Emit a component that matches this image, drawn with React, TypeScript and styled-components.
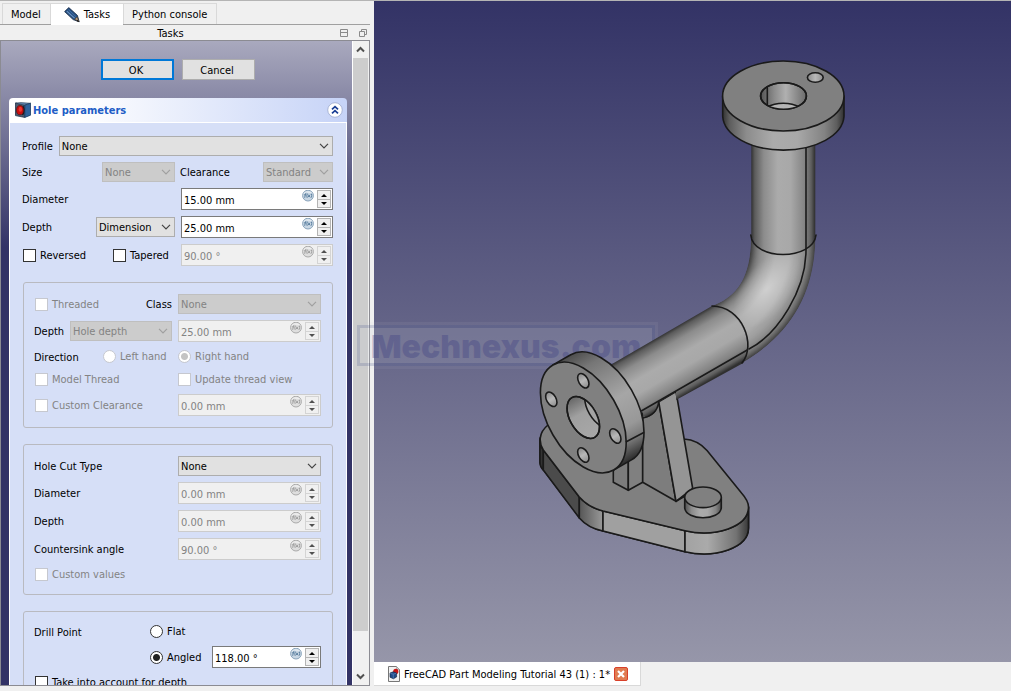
import React, { useId } from "react";
import styled, { createGlobalStyle, css } from "styled-components";

const GlobalStyle = createGlobalStyle`
  *, *::before, *::after { box-sizing: border-box; }
  body {
    margin: 0;
    background: #f0f0f0;
    color: #000;
    font: 11px/14px "DejaVu Sans Condensed", "Noto Sans", sans-serif;
  }
  button, input, select { font: inherit; color: inherit; margin: 0; padding: 0; }
`;

/* ---------- window ---------- */

const Window = styled.div`
  display: flex;
  height: 100vh;
  overflow: hidden;
`;

const Dock = styled.aside`
  flex: 0 0 374px;
  display: flex;
  flex-direction: column;
  padding: 0 4px 5px 0;
  border-top: 1px solid #b4b4b4;
`;

const Tabs = styled.div`
  display: flex;
  height: 24px;
  padding: 2px 0 0 2px;
  border-bottom: 1px solid #a0a0a0;
`;

const Tab = styled.button<{ $active?: boolean }>`
  display: flex;
  align-items: center;
  gap: 4px;
  height: ${(p) => (p.$active ? 22 : 21)}px;
  padding: ${(p) => (p.$active ? "0 13px" : "2px 9px 0 8px")};
  border: 1px solid #d9d9d9;
  border-width: ${(p) => (p.$active ? "1px 0 0" : "1px 1px 0")};
  background: ${(p) => (p.$active ? "#fff" : "#f0f0f0")};
  white-space: nowrap;
`;

const DockTitle = styled.header`
  display: flex;
  align-items: center;
  height: 15px;
  padding-right: 3px;
  gap: 11px;
`;

const DockName = styled.h1`
  flex: 1;
  margin: 0 0 0 12px;
  padding-top: 2px;
  font-size: 11px;
  font-weight: 400;
  text-align: center;
`;

const BareButton = styled.button`
  display: flex;
  border: 0;
  background: none;
`;

const Panel = styled.div`
  flex: 1;
  min-height: 0;
  display: flex;
  border: 1px solid #8b8b92;
`;

const TaskArea = styled.form`
  flex: 1;
  min-width: 0;
  overflow: hidden;
  padding: 18px 5px 0 8px;
  border-right: 1px solid #fff;
  background: #333366 linear-gradient(#a9a9be, #333366) top / 100% 206px no-repeat;
`;

const Actions = styled.div`
  display: flex;
  justify-content: center;
  gap: 8px;
  margin-bottom: 18px;
`;

const ActionButton = styled.button<{ $primary?: boolean }>`
  width: 73px;
  height: 21px;
  padding: ${(p) => (p.$primary ? "2px 3px 0 0" : "2px 3px 0 0")};
  border: ${(p) => (p.$primary ? "2px solid #0078d7" : "1px solid #adadad")};
  background: #e1e1e1;
`;

const Card = styled.section`
  border-radius: 4px 4px 0 0;
  overflow: hidden;
`;

const CardHeader = styled.header`
  display: flex;
  align-items: center;
  gap: 2px;
  height: 25px;
  padding: 0 4px 0 6px;
  background: linear-gradient(90deg, #fff 20%, #c6d3f7);
  border-bottom: 1px solid #fff;
`;

const CardTitle = styled.h2`
  flex: 1;
  margin: 0;
  padding-top: 2px;
  color: #215dc6;
  font-size: 11px;
  font-weight: 700;
`;

const CardBody = styled.div`
  display: flex;
  flex-direction: column;
  gap: 16px;
  padding: 13px 13px 20px;
  border: 1px solid #fff;
  border-width: 0 1px;
  background: #d6dff7;
`;

const Rows = styled.div`
  display: flex;
  flex-direction: column;
  gap: 6px;
`;

const Group = styled.fieldset`
  display: flex;
  flex-direction: column;
  gap: 6px;
  min-width: 0;
  margin: 0;
  padding: 11px;
  border: 1px solid #b9bac0;
  border-radius: 3px;
`;

const Row = styled.div<{ $right?: string }>`
  display: grid;
  grid-template-columns: minmax(0, 1fr) ${(p) => p.$right ?? "minmax(0, 1fr)"};
  column-gap: 6px;
  align-items: center;
`;

const Line = styled.div`
  display: flex;
  align-items: center;
  gap: 6px;
`;

const Cell = styled.div`
  display: flex;
  align-items: center;
  justify-content: space-between;
  min-width: 0;
`;

const labelText = css`
  margin-left: -1px;
  padding-top: 2px;
  white-space: nowrap;
`;

const Label = styled.label`
  ${labelText}
`;

const Caption = styled.span`
  ${labelText}
`;

/* ---------- controls ---------- */

const SelectBox = styled.div<{ $width?: number }>`
  position: relative;
  ${(p) => (p.$width ? css`width: ${p.$width}px;` : css`flex: 1; min-width: 0;`)}
  svg {
    position: absolute;
    right: 4px;
    top: 7px;
    pointer-events: none;
  }
`;

const Select = styled.select`
  appearance: none;
  display: block;
  width: 100%;
  height: 20px;
  padding: 2px 14px 0 2px;
  border: 1px solid #adadad;
  border-radius: 0;
  background: #e1e1e1;
  &:disabled { opacity: 1; color: #838383; background: #ccc; border-color: #bfbfbf; }
`;

const SpinBox = styled.div<{ $disabled?: boolean; $width?: number }>`
  display: flex;
  align-items: flex-start;
  gap: 3px;
  height: 22px;
  ${(p) => (p.$width ? css`width: ${p.$width}px;` : css`width: 100%;`)}
  padding: 1px;
  border: 1px solid ${(p) => (p.$disabled ? "#ccc" : "#7a7a7a")};
  background: ${(p) => (p.$disabled ? "#f0f0f0" : "#fff")};
  color: ${(p) => (p.$disabled ? "#838383" : "#000")};
`;

const SpinInput = styled.input`
  flex: 1;
  min-width: 0;
  height: 18px;
  padding: 3px 0 0 1px;
  border: 0;
  outline: 0;
  background: none;
`;

const Steppers = styled.div`
  display: flex;
  flex-direction: column;
  width: 14px;
`;

const Step = styled.button<{ $lower?: boolean }>`
  display: flex;
  align-items: center;
  justify-content: center;
  height: ${(p) => (p.$lower ? 9 : 10)}px;
  margin-top: ${(p) => (p.$lower ? -1 : 0)}px;
  border: 1px solid #b4b4b4;
  background: #f0f0f0;
  color: #000;
  &:disabled { border-color: #d4d4d4; color: #505050; }
`;

const ToggleLabel = styled.label<{ $disabled?: boolean; $width?: number }>`
  display: flex;
  align-items: center;
  gap: 4px;
  height: 17px;
  ${(p) => p.$width && css`width: ${p.$width}px;`}
  white-space: nowrap;
  color: ${(p) => (p.$disabled ? "#838383" : "#000")};
`;

const ToggleText = styled.span`
  padding-top: 1px;
`;

const Toggle = styled.input`
  appearance: none;
  flex: none;
  width: 13px;
  height: 13px;
  border: 1px solid #333;
  background: #fff;
  &[type="radio"] { border-radius: 50%; }
  &:disabled { border-color: #c6c8cf; }
  &[type="radio"]:checked { background: radial-gradient(circle, #222 0 3px, #fff 4px); }
  &[type="radio"]:checked:disabled { background: radial-gradient(circle, #c4c4c4 0 3px, #fff 4px); }
`;

const ScrollBar = styled.div`
  display: flex;
  flex-direction: column;
  align-items: center;
  width: 16px;
  padding-right: 1px;
  background: #f0f0f0;
`;

const ScrollArrow = styled.button`
  display: flex;
  align-items: center;
  justify-content: center;
  width: 100%;
  height: 17px;
  border: 0;
  background: none;
`;

const ScrollTrack = styled.div`
  flex: 1;
  width: 100%;
`;

const ScrollThumb = styled.div`
  height: 94%;
  background: #cdcdcd;
`;

/* ---------- 3D view ---------- */

const Main = styled.main`
  flex: 1;
  min-width: 0;
  display: flex;
  flex-direction: column;
`;

const Viewport = styled.div`
  position: relative;
  flex: 1;
  min-height: 0;
  border-top: 1px solid #b4b4b4;
  background: linear-gradient(#333366, #9696a9);
`;

const Scene = styled.svg`
  position: relative;
  display: block;
  width: 100%;
  height: 100%;
`;

const Watermark = styled.div`
  position: absolute;
  left: -20px;
  top: 321px;
  padding: 3px;
  background: rgba(200, 205, 215, 0.08);
`;

const WatermarkText = styled.div`
  width: 298px;
  height: 41px;
  border: 3px solid rgba(60, 75, 135, 0.2);
  background: rgba(200, 205, 215, 0.1);
  background-clip: padding-box;
  color: rgba(60, 62, 130, 0.34);
  font: 900 32px/37px Inter, "DejaVu Sans", sans-serif;
  text-align: center;
`;

const DocumentBar = styled.div`
  height: 29px;
  background: #f0f0f0;
`;

const DocumentTab = styled.div`
  display: flex;
  align-items: center;
  width: max-content;
  height: 24px;
  padding: 0 12px 0 14px;
  gap: 4px;
  border: 1px solid #d9d9d9;
  border-width: 0 1px 1px 0;
  background: #fff;
  white-space: nowrap;
`;

const DocumentName = styled.span`
  padding-top: 2px;
`;

/* ---------- icons ---------- */

const Chevron = ({ color }: { color: string }) => (
  <svg width="10" height="6" viewBox="0 0 10 6" fill="none" stroke={color} strokeWidth="1.2">
    <path d="M1 .8 5 4.8 9 .8" />
  </svg>
);

const ScrollChevron = ({ down }: { down?: boolean }) => (
  <svg width="9" height="7" viewBox="0 0 9 7" fill="none" stroke="#505050" strokeWidth="2">
    <path d={down ? "M1 1.5 4.5 5 8 1.5" : "M1 5.5 4.5 2 8 5.5"} />
  </svg>
);

const FxIcon = ({ disabled }: { disabled?: boolean }) => {
  const ink = disabled ? "#9a9a9a" : "#54799b";
  return (
    <svg width="12" height="12" viewBox="0 0 12 12" fill="none">
      <circle cx="6" cy="5.6" r="5.4" fill={disabled ? "#dedede" : "#c9d7e4"} stroke={disabled ? "#aaa" : "#8aa4bb"} />
      <path d="M1.5 4.2Q6 1.4 10.5 4.2L10 2.6Q6 -.2 2 2.6Z" fill="#fff" opacity=".5" />
      <g stroke={ink} strokeWidth=".9">
        <path d="M4.4 3.2C3.4 3 3.4 3.8 3.2 5L2.7 7.8M2.2 4.8H4.2M5.4 3.6Q4.4 5.6 5.1 7.8M9.4 3.6Q10.2 5.6 9 7.8M6.1 4.6 8 7.2M8.2 4.6 5.9 7.2" />
      </g>
    </svg>
  );
};

const PencilIcon = () => (
  <svg width="16" height="16" viewBox="0 0 16 16">
    <path d="M.6 4.6 4.8.6 13.4 8.4 15.2 14.8 9.2 12.6Z" fill="#274f80" stroke="#10233f" strokeWidth=".8" />
    <path d="M2.8 4.2 10.6 11.2" stroke="#6f97c4" strokeWidth="1.1" />
    <path d="M4.4 2.6 12.2 9.8" stroke="#3f6ea6" strokeWidth="1" />
    <path d="M10.6 12.2 13.2 9.8 15 14.8Z" fill="#b79a7a" stroke="#33291f" strokeWidth=".5" />
    <path d="m13.4 12.8 1.6 2.2-2.4-.9Z" fill="#111" />
  </svg>
);

const HoleIcon = () => (
  <svg width="16" height="16" viewBox="0 0 16 16">
    <path d="M.5 1 9.8 3.2V15.4L.5 13.6Z" fill="#4b5b70" stroke="#23344b" strokeWidth=".8" />
    <path d="M.5 1 6 .5 15.5 1.2 9.8 3.2Z" fill="#5d83ab" stroke="#23344b" strokeWidth=".5" />
    <path d="M9.8 3.2 15.5 1.2V13.2L9.8 15.4Z" fill="#2f639b" stroke="#1b3a60" strokeWidth=".8" />
    <path d="M7.8 4.2Q10.2 8.5 7.6 13" fill="none" stroke="#101820" strokeWidth="1.4" />
    <ellipse cx="5" cy="8.2" rx="3.5" ry="4.6" fill="#cc0e0e" stroke="#5a1616" strokeWidth=".8" />
    <ellipse cx="5.4" cy="7.2" rx="1.7" ry="2.5" fill="#ef3a30" />
  </svg>
);

const CollapseIcon = () => (
  <svg width="16" height="16" viewBox="0 0 16 16" fill="none">
    <circle cx="8" cy="8" r="7.3" fill="#fff" stroke="#a9b5d6" />
    <path d="M5 7.4 8 4.6 11 7.4M5 11.4 8 8.6 11 11.4" stroke="#1b3f95" strokeWidth="1.7" />
  </svg>
);

const FloatIcon = () => (
  <svg width="8" height="8" viewBox="0 0 8 8" fill="none" stroke="#8a8a8a">
    <path d="M.5 .5H7.5V7.5H.5ZM.5 3.5H7.5" />
  </svg>
);

const RestoreIcon = () => (
  <svg width="8" height="8" viewBox="0 0 8 8" fill="none" stroke="#8a8a8a">
    <path d="M2.5 2.5V.5H7.5V5.5H5.5M.5 2.5H5.5V7.5H.5Z" />
  </svg>
);

const DocumentIcon = () => (
  <svg width="12" height="16" viewBox="0 0 12 16">
    <path d="M.5 .5H8.5L11.5 3.5V15.5H.5Z" fill="#f2f2f2" stroke="#777" />
    <path d="M8.5 .5V3.5H11.5" fill="#ccc" stroke="#999" strokeWidth=".6" />
    <circle cx="7.8" cy="5.4" r="2.6" fill="#c81414" />
    <path d="M2 7 5.2 5.8 8.6 7V11L5.4 12.8 2 11.2Z" fill="#204a87" stroke="#0d1f3c" strokeWidth=".6" />
    <path d="M2.2 7.2 5.2 8.2 8.4 7.2M5.3 8.2V12.4" stroke="#5f8dc4" strokeWidth=".6" fill="none" />
  </svg>
);

const CloseIcon = () => (
  <svg width="14" height="14" viewBox="0 0 14 14">
    <rect x=".5" y=".5" width="13" height="13" rx="1.5" fill="#e07b50" stroke="#d8402a" />
    <path d="m4 4 6 6M10 4l-6 6" stroke="#fff" strokeWidth="2.2" />
  </svg>
);

/* ---------- composed fields ---------- */

type FieldProps = { id?: string; label?: string; value: string; width?: number; disabled?: boolean };

const Drop = ({ id, label, value, width, disabled }: FieldProps) => (
  <SelectBox $width={width}>
    <Select id={id} aria-label={label} disabled={disabled} defaultValue={value}>
      <option>{value}</option>
    </Select>
    <Chevron color={disabled ? "#a0a0a0" : "#444"} />
  </SelectBox>
);

const Spin = ({ id, label, value, width, disabled }: FieldProps) => (
  <SpinBox $disabled={disabled} $width={width}>
    <SpinInput id={id} aria-label={label} defaultValue={value} disabled={disabled} />
    <FxIcon disabled={disabled} />
    <Steppers>
      <Step type="button" aria-label="Increase" disabled={disabled}>
        <svg width="6" height="3" viewBox="0 0 6 3"><path d="M0 3 3 0 6 3Z" fill="currentColor" /></svg>
      </Step>
      <Step type="button" $lower aria-label="Decrease" disabled={disabled}>
        <svg width="6" height="3" viewBox="0 0 6 3"><path d="M0 0 3 3 6 0Z" fill="currentColor" /></svg>
      </Step>
    </Steppers>
  </SpinBox>
);

type CheckProps = {
  text: string;
  type?: "checkbox" | "radio";
  name?: string;
  checked?: boolean;
  disabled?: boolean;
  width?: number;
};

const Check = ({ text, type = "checkbox", name, checked, disabled, width }: CheckProps) => (
  <ToggleLabel $disabled={disabled} $width={width}>
    <Toggle type={type} name={name} defaultChecked={checked} disabled={disabled} />
    <ToggleText>{text}</ToggleText>
  </ToggleLabel>
);

const SpinRow = ({ text, value, right, disabled }: { text: string; value: string; right?: string; disabled?: boolean }) => {
  const id = useId();
  return (
    <Row $right={right}>
      <Label htmlFor={id}>{text}</Label>
      <Spin id={id} value={value} disabled={disabled} />
    </Row>
  );
};

/* ---------- the flanged pipe ---------- */

const PipeStops = () => (
  <>
    <stop offset="0" stopColor="#2e2e2e" />
    <stop offset=".06" stopColor="#5c5c5c" />
    <stop offset=".2" stopColor="#8c8c8c" />
    <stop offset=".42" stopColor="#ababab" />
    <stop offset=".62" stopColor="#a8a8a8" />
    <stop offset=".84" stopColor="#838383" />
    <stop offset=".94" stopColor="#5e5e5e" />
    <stop offset="1" stopColor="#303030" />
  </>
);

const elbow =
  "M751 236C751 278 737 297 712 306C740 309 757 343 742 363C792 334 815 292 815.5 236Q806 254.5 783.3 254.5Q757 254.5 751 236Z";
const elbowAxis = "M783 200V245C783 283 762 315 728 334L690 356";

const Model = () => (
  <Scene viewBox="374 1 637 661" role="img" aria-label="Flanged pipe with mounting base">
    <defs>
      <linearGradient id="flangeTop" gradientUnits="userSpaceOnUse" x1="722" y1="0" x2="844" y2="0"><PipeStops /></linearGradient>
      <linearGradient id="pipeUp" gradientUnits="userSpaceOnUse" x1="751" y1="0" x2="815" y2="0"><PipeStops /></linearGradient>
      <linearGradient id="pipeSide" gradientUnits="userSpaceOnUse" x1="661" y1="335" x2="693" y2="390"><PipeStops /></linearGradient>
      <linearGradient id="flangeSide" gradientUnits="userSpaceOnUse" x1="571" y1="354" x2="631" y2="460">
        <stop offset="0" stopColor="#4c4c4c" />
        <stop offset=".15" stopColor="#767676" />
        <stop offset=".5" stopColor="#a6a6a6" />
        <stop offset=".74" stopColor="#989898" />
        <stop offset=".86" stopColor="#777" />
        <stop offset="1" stopColor="#2c2c2c" />
      </linearGradient>
      <linearGradient id="bore" x1="0" y1="0" x2="1" y2="0">
        <stop offset="0" stopColor="#555" />
        <stop offset=".3" stopColor="#8c8c8c" />
        <stop offset=".55" stopColor="#b0b0b0" />
        <stop offset="1" stopColor="#6a6a6a" />
      </linearGradient>
      <linearGradient id="boreSide" x1="0" y1="0" x2="1" y2="0">
        <stop offset="0" stopColor="#666" />
        <stop offset=".4" stopColor="#a0a0a0" />
        <stop offset="1" stopColor="#a8a8a8" />
      </linearGradient>
      <linearGradient id="boltHole" x1="0" y1="0" x2="1" y2="0">
        <stop offset="0" stopColor="#8a8a8a" />
        <stop offset=".5" stopColor="#b8b8b8" />
        <stop offset="1" stopColor="#8e8e8e" />
      </linearGradient>
      <linearGradient id="baseBend" gradientUnits="userSpaceOnUse" x1="579" y1="0" x2="603" y2="0">
        <stop offset="0" stopColor="#555" />
        <stop offset="1" stopColor="#999" />
      </linearGradient>
      <linearGradient id="baseEnd" gradientUnits="userSpaceOnUse" x1="685" y1="0" x2="749" y2="0">
        <stop offset="0" stopColor="#a2a2a2" />
        <stop offset=".35" stopColor="#aaa" />
        <stop offset=".8" stopColor="#737373" />
        <stop offset="1" stopColor="#363636" />
      </linearGradient>
      <linearGradient id="boss" gradientUnits="userSpaceOnUse" x1="684" y1="0" x2="722" y2="0"><PipeStops /></linearGradient>
      <radialGradient id="shine" gradientUnits="userSpaceOnUse" cx="0" cy="0" r="1" gradientTransform="translate(767 289) rotate(-52) scale(46 24)">
        <stop offset="0" stopColor="#fff" stopOpacity=".42" />
        <stop offset="1" stopColor="#fff" stopOpacity="0" />
      </radialGradient>
      <filter id="soften" filterUnits="userSpaceOnUse" x="660" y="180" width="200" height="220">
        <feGaussianBlur stdDeviation="2" />
      </filter>
      <clipPath id="elbowClip"><path d={elbow} /></clipPath>
      <clipPath id="topBore"><ellipse cx="783.5" cy="96" rx="22.9" ry="13.3" /></clipPath>
      <clipPath id="sideBore"><ellipse cx="583.3" cy="417.5" rx="22.9" ry="13.3" transform="rotate(60 583.3 417.5)" /></clipPath>
    </defs>

    <g stroke="#1a1a1a" strokeWidth="1.6" strokeLinejoin="round" strokeLinecap="round" fill="none">
      {/* base plate */}
      <path d="M540 438V463Q541 468 545 472L580 518Q589 528 603 531L685 551.7C715 558.5 748.5 548 748.5 528V507Z" fill="#808080" />
      <path d="M540 440Q540 446 543.3 450V470Q540 467 540 462Z" fill="#333" />
      <path d="M543.3 450 579.3 497V518L543.3 470Z" fill="#4b4b4b" />
      <path d="M579.3 497Q588 507 603 511V531Q588 528 579.3 518Z" fill="url(#baseBend)" />
      <path d="M603 511 685 530.7V551.7L603 531Z" fill="#a0a0a0" />
      <path d="M685 530.7C715 537.5 748.5 527 748.5 507V528C748.5 548 715 558.5 685 551.7Z" fill="url(#baseEnd)" />
      <path d="M548 425C538 433 539 443 543.3 450L579.3 497Q588 507 603 511L685 530.7C715 537.5 748.5 527 748.5 507C748.5 502 745.5 497.5 741.5 493L707 450.5Q698 440 684 439L640 425Z" fill="#808080" />

      {/* foot and rib */}
      <path d="M613.3 462V482.3L628.3 490.3V455Z" fill="#7c7c7c" />
      <path d="M628.3 455V490.3L642.7 482.3V425Z" fill="#808080" />
      <path d="M642.7 410V482.3L676 501.3 658.7 401.7Z" fill="#7d7d7d" />
      <path d="M658.7 401.7 676 391.5 692.7 488.5 676 501.3Z" fill="#959595" />
      <path d="M676 501.3 686 495.5" />

      {/* boss */}
      <path d="M684.7 497.3V508C686 521 720 521 721.3 508V497.3Z" fill="url(#boss)" />
      <ellipse cx="703" cy="497.3" rx="18.3" ry="10.3" fill="#808080" />

      {/* inclined pipe */}
      <path d="M712 306 600 371 626 425 641.7 411 645 417.7Q657 416 658.7 401.7L676 391.5V400L743.3 363C755 340 740 308 712 306Z" fill="url(#pipeSide)" stroke="none" />
      <path d="M643 418Q657 415 658.7 402" />
      <path d="M641.7 410.7 749 349" />

      {/* elbow */}
      <g clipPath="url(#elbowClip)" stroke="none">
        <path d={elbow} fill="#333" />
        <g filter="url(#soften)">
          <path d={elbowAxis} stroke="#5a5a5a" strokeWidth="62" strokeLinecap="butt" />
          <path d={elbowAxis} stroke="#7c7c7c" strokeWidth="55" strokeLinecap="butt" />
          <path d={elbowAxis} stroke="#939393" strokeWidth="46" strokeLinecap="butt" />
          <path d={elbowAxis} stroke="#a2a2a2" strokeWidth="34" strokeLinecap="butt" />
          <path d={elbowAxis} stroke="#adadad" strokeWidth="20" strokeLinecap="butt" />
        </g>
        <path d={elbow} fill="url(#shine)" />
      </g>

      {/* upright pipe */}
      <path d="M751.3 140V236Q757 254.5 783.3 254.5Q809 254.5 815.3 236V140Z" fill="url(#pipeUp)" stroke="none" />
      <path d="M750.8 235C753 261 813 261 816 235" />
      <path d="M806 140V250C806 290 778 334 749 349" />
      <path d="M712 306C742 306 757 345 742 363" />

      {/* top flange */}
      <path d="M722.7 96V116.5A60.7 35 0 0 0 844 116.5V96Z" fill="url(#flangeTop)" />
      <ellipse cx="783.3" cy="96" rx="60.7" ry="35" fill="#808080" />
      <ellipse cx="783.5" cy="96" rx="22.9" ry="13.3" fill="url(#bore)" />
      <g clipPath="url(#topBore)">
        <path d="M767.3 80V108" />
        <ellipse cx="783.3" cy="116.6" rx="22.9" ry="13.3" fill="#b5b5b5" />
      </g>
      <ellipse cx="783.5" cy="96" rx="22.9" ry="13.3" />
      <ellipse cx="815.3" cy="77.5" rx="7.9" ry="4.7" fill="url(#boltHole)" />

      {/* side flange */}
      <path d="M552.95 364.9 570.75 354.7A60.7 35 60 0 1 631.45 459.9L613.65 470.1Z" fill="url(#flangeSide)" />
      <ellipse cx="583.3" cy="417.5" rx="60.7" ry="35" transform="rotate(60 583.3 417.5)" fill="#808080" />
      <path d="M626.3 441.7 643.3 432.7" />
      <ellipse cx="583.3" cy="417.5" rx="22.9" ry="13.3" transform="rotate(60 583.3 417.5)" fill="url(#boreSide)" />
      <g clipPath="url(#sideBore)">
        <ellipse cx="601" cy="407.3" rx="22.9" ry="13.3" transform="rotate(60 601 407.3)" fill="#a4a4a4" />
      </g>
      <ellipse cx="583.3" cy="417.5" rx="22.9" ry="13.3" transform="rotate(60 583.3 417.5)" />
      {[[583.3, 380.7], [551.3, 399.3], [615.3, 436], [583.3, 455]].map(([x, y]) => (
        <ellipse key={`${x}-${y}`} cx={x} cy={y} rx="7.9" ry="4.7" transform={`rotate(60 ${x} ${y})`} fill="url(#boltHole)" />
      ))}
    </g>
  </Scene>
);

/* ---------- application ---------- */

export default function App() {
  return (
    <>
      <GlobalStyle />
      <Window>
        <Dock>
          <Tabs role="tablist">
            <Tab role="tab">Model</Tab>
            <Tab role="tab" $active aria-selected><PencilIcon />Tasks</Tab>
            <Tab role="tab">Python console</Tab>
          </Tabs>
          <DockTitle>
            <DockName>Tasks</DockName>
            <BareButton aria-label="Float"><FloatIcon /></BareButton>
            <BareButton aria-label="Restore"><RestoreIcon /></BareButton>
          </DockTitle>
          <Panel>
            <TaskArea onSubmit={(e) => e.preventDefault()}>
              <Actions>
                <ActionButton $primary>OK</ActionButton>
                <ActionButton type="button">Cancel</ActionButton>
              </Actions>
              <Card>
                <CardHeader>
                  <HoleIcon />
                  <CardTitle>Hole parameters</CardTitle>
                  <BareButton type="button" aria-label="Collapse"><CollapseIcon /></BareButton>
                </CardHeader>
                <CardBody>
                  <Rows>
                    <Line>
                      <Label htmlFor="profile">Profile</Label>
                      <Drop id="profile" value="None" />
                    </Line>
                    <Row>
                      <Cell>
                        <Label htmlFor="size">Size</Label>
                        <Drop id="size" value="None" width={73} disabled />
                      </Cell>
                      <Cell>
                        <Label htmlFor="clearance">Clearance</Label>
                        <Drop id="clearance" value="Standard" width={70} disabled />
                      </Cell>
                    </Row>
                    <SpinRow text="Diameter" value="15.00 mm" />
                    <Row>
                      <Cell>
                        <Label htmlFor="depthMode">Depth</Label>
                        <Drop id="depthMode" value="Dimension" width={79} />
                      </Cell>
                      <Spin label="Depth" value="25.00 mm" />
                    </Row>
                    <Row>
                      <Cell>
                        <Check text="Reversed" />
                        <Check text="Tapered" width={62} />
                      </Cell>
                      <Spin label="Taper angle" value="90.00 °" disabled />
                    </Row>
                  </Rows>

                  <Group>
                    <Row $right="143px">
                      <Cell>
                        <Check text="Threaded" disabled />
                        <Label htmlFor="threadClass">Class</Label>
                      </Cell>
                      <Drop id="threadClass" value="None" disabled />
                    </Row>
                    <Row $right="143px">
                      <Cell>
                        <Label htmlFor="threadDepth">Depth</Label>
                        <Drop id="threadDepth" value="Hole depth" width={102} disabled />
                      </Cell>
                      <Spin label="Thread depth" value="25.00 mm" disabled />
                    </Row>
                    <Row $right="143px">
                      <Cell>
                        <Caption>Direction</Caption>
                        <Check type="radio" name="hand" text="Left hand" width={69} disabled />
                      </Cell>
                      <Check type="radio" name="hand" text="Right hand" checked disabled />
                    </Row>
                    <Row $right="143px">
                      <Check text="Model Thread" disabled />
                      <Check text="Update thread view" disabled />
                    </Row>
                    <Row $right="143px">
                      <Check text="Custom Clearance" disabled />
                      <Spin label="Custom clearance" value="0.00 mm" disabled />
                    </Row>
                  </Group>

                  <Group>
                    <Row $right="143px">
                      <Label htmlFor="cutType">Hole Cut Type</Label>
                      <Drop id="cutType" value="None" />
                    </Row>
                    <SpinRow text="Diameter" value="0.00 mm" right="143px" disabled />
                    <SpinRow text="Depth" value="0.00 mm" right="143px" disabled />
                    <SpinRow text="Countersink angle" value="90.00 °" right="143px" disabled />
                    <Check text="Custom values" disabled />
                  </Group>

                  <Group>
                    <Row $right="171px">
                      <Caption>Drill Point</Caption>
                      <Check type="radio" name="drill" text="Flat" />
                    </Row>
                    <Row $right="171px">
                      <span />
                      <Cell>
                        <Check type="radio" name="drill" text="Angled" checked />
                        <Spin label="Drill angle" value="118.00 °" width={109} />
                      </Cell>
                    </Row>
                    <Check text="Take into account for depth" />
                  </Group>
                </CardBody>
              </Card>
            </TaskArea>
            <ScrollBar>
              <ScrollArrow aria-label="Scroll up"><ScrollChevron /></ScrollArrow>
              <ScrollTrack><ScrollThumb /></ScrollTrack>
              <ScrollArrow aria-label="Scroll down"><ScrollChevron down /></ScrollArrow>
            </ScrollBar>
          </Panel>
        </Dock>

        <Main>
          <Viewport>
            <Watermark><WatermarkText>Mechnexus.com</WatermarkText></Watermark>
            <Model />
          </Viewport>
          <DocumentBar>
            <DocumentTab>
              <DocumentIcon />
              <DocumentName>FreeCAD Part Modeling Tutorial 43 (1) : 1*</DocumentName>
              <BareButton aria-label="Close document"><CloseIcon /></BareButton>
            </DocumentTab>
          </DocumentBar>
        </Main>
      </Window>
    </>
  );
}
